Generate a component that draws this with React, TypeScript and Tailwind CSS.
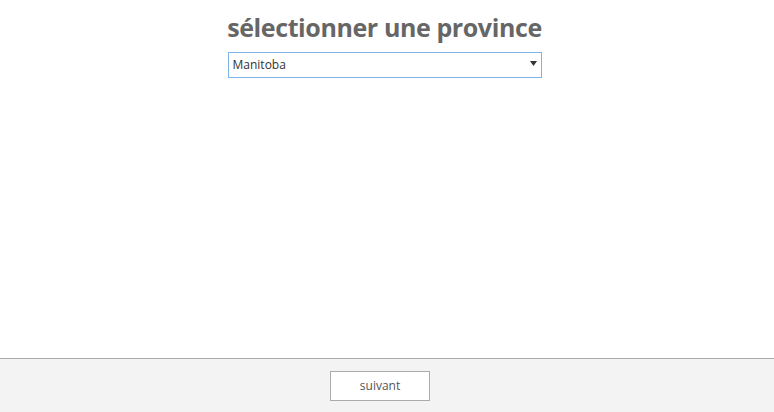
import { useState } from "react";

const provinces = [
  "Alberta",
  "Colombie-Britannique",
  "Manitoba",
  "Nouveau-Brunswick",
  "Terre-Neuve-et-Labrador",
  "Nouvelle-Écosse",
  "Ontario",
  "Île-du-Prince-Édouard",
  "Québec",
  "Saskatchewan",
];

export default function App() {
  const [province, setProvince] = useState("Manitoba");

  return (
    <div className="h-screen flex flex-col bg-white" style={{ fontFamily: '"Open Sans", "Noto Sans", sans-serif' }}>
      {/* Main */}
      <div className="flex-1 flex flex-col items-center pt-[9px] pr-[5px]">
        <h1 className="text-[25px] leading-[36px] font-bold text-[#666666] tracking-[-0.4px]">sélectionner une province</h1>
        <div className="relative mt-[6px] w-[314px]">
          <select
            value={province}
            onChange={(e) => setProvince(e.target.value)}
            className="w-full h-[26px] appearance-none border border-[#7eb4ea] bg-white pl-[4px] pr-6 text-[12px] text-[#333333] outline-none"
          >
            {provinces.map((p) => (
              <option key={p} value={p}>{p}</option>
            ))}
          </select>
          <svg className="pointer-events-none absolute right-[5px] top-[10px]" width="7" height="5" viewBox="0 0 7 5">
            <path d="M0 0 H7 L3.5 5 Z" fill="#333333" />
          </svg>
        </div>
      </div>

      {/* Footer */}
      <div className="h-[54px] border-t border-[#ababab] bg-[#f3f3f3] flex items-start justify-center pt-[12px] pr-[14px]">
        <button className="w-[100px] h-[30px] border border-[#ababab] bg-white text-[12px] text-[#555555]">suivant</button>
      </div>
    </div>
  );
}
